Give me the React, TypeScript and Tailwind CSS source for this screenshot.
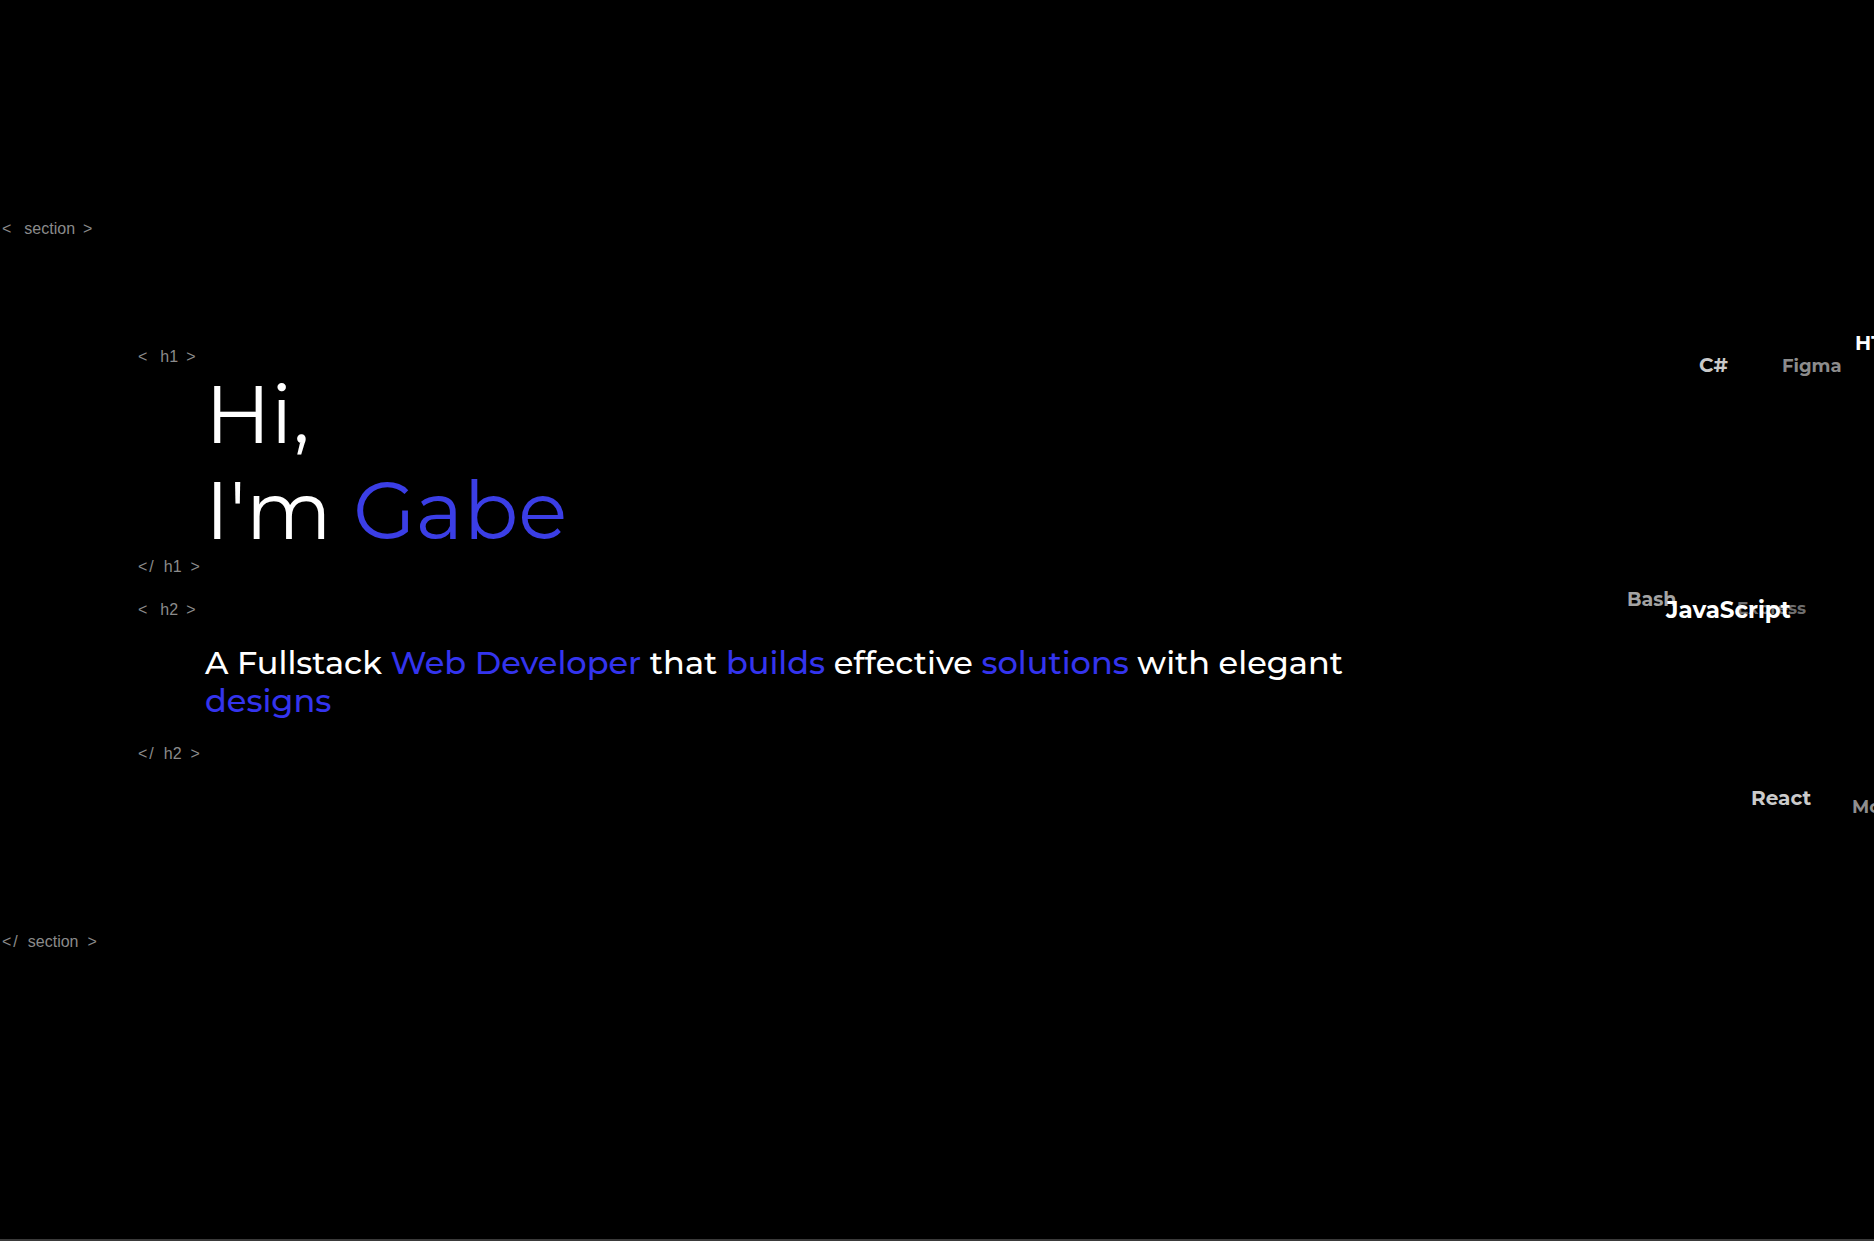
import React from 'react';

const TAG_FONT = { fontFamily: '"Liberation Sans", Arial, sans-serif' };

function Tag({ name, closing = false }: { name: string; closing?: boolean }) {
  return (
    <div className="flex items-center h-[18px] text-[16px] leading-[18px] text-[#8b8b8b]" style={TAG_FONT}>
      <span>&lt;</span>
      {closing && <span className="ml-[2px]">/</span>}
      <span className={closing ? 'ml-[10px]' : 'ml-[13px]'}>{name}</span>
      <span className={closing ? 'ml-[9px]' : 'ml-[8px]'}>&gt;</span>
    </div>
  );
}

interface CloudWord {
  text: string;
  x: number;
  y: number;
  size: number;
  color: string;
  z: number;
}

const words: CloudWord[] = [
  { text: 'Express', x: 1737, y: 608, size: 17, color: '#6d6d6d', z: 1 },
  { text: 'HTML', x: 1855, y: 343, size: 20, color: '#ffffff', z: 3 },
  { text: 'C#', x: 1699, y: 365, size: 20, color: '#c9c9c9', z: 2 },
  { text: 'Figma', x: 1782, y: 366, size: 18, color: '#8c8c8c', z: 1 },
  { text: 'Bash', x: 1627, y: 599, size: 19, color: '#a3a3a3', z: 2 },
  { text: 'JavaScript', x: 1666, y: 610, size: 23, color: '#ffffff', z: 3 },
  { text: 'React', x: 1751, y: 798, size: 20, color: '#cbcbcb', z: 2 },
  { text: 'MongoDB', x: 1852, y: 807, size: 18, color: '#8e8e8e', z: 1 },
];

function SkillCloud() {
  return (
    <div className="absolute inset-0 pointer-events-none">
      {words.map((w) => (
        <span
          key={w.text}
          className="absolute -translate-y-1/2 font-bold whitespace-nowrap leading-none"
          style={{
            left: w.x,
            top: w.y,
            fontSize: w.size,
            color: w.color,
            zIndex: w.z,
            fontFamily: 'Montserrat, "Open Sans", sans-serif',
          }}
        >
          {w.text}
        </span>
      ))}
    </div>
  );
}

export default function App() {
  const hero = { fontFamily: 'Montserrat, "Open Sans", "Noto Sans", sans-serif' };
  return (
    <div className="w-full h-[1241px] bg-black flex flex-col overflow-hidden">
      <div className="relative flex-1 overflow-hidden">
        <SkillCloud />
        <section className="pt-[220px] pl-[2px]">
          <Tag name="section" />

          <div className="mt-[110px] pl-[136px]">
            <Tag name="h1" />
            <h1
              className="pl-[67px] text-[81px] leading-[96px] font-normal text-white"
              style={hero}
            >
              Hi,
              <br />
              I'm <span className="text-[#3b3ee6]">Gabe</span>
            </h1>
            <Tag name="h1" closing />

            <div className="mt-[25px]">
              <Tag name="h2" />
            </div>
            <h2
              className="mt-[25px] pl-[67px] max-w-[1250px] text-[32px] leading-[38px] font-medium text-white"
              style={hero}
            >
              A Fullstack <span className="text-[#3434ee]">Web Developer</span> that{' '}
              <span className="text-[#3434ee]">builds</span> effective{' '}
              <span className="text-[#3434ee]">solutions</span> with elegant{' '}
              <span className="text-[#3434ee]">designs</span>
            </h2>
            <div className="mt-[25px]">
              <Tag name="h2" closing />
            </div>
          </div>

          <div className="mt-[170px]">
            <Tag name="section" closing />
          </div>
        </section>
      </div>
      <div className="h-[2px] bg-[#3a3a3a]" />
    </div>
  );
}
